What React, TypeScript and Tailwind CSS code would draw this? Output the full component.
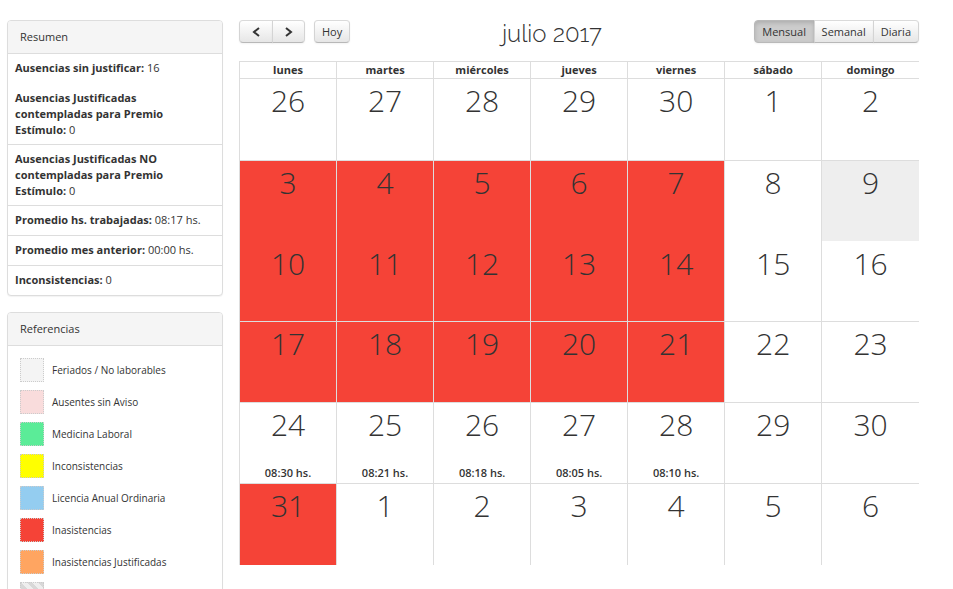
import type { ReactNode } from "react";

type Stat = { label: string; value: string; spacing: string };

const stats: Stat[] = [
  { label: "Ausencias sin justificar:", value: "16", spacing: "pb-2" },
  {
    label: "Ausencias Justificadas contempladas para Premio Estímulo:",
    value: "0",
    spacing: "border-b pb-[6px]",
  },
  {
    label: "Ausencias Justificadas NO contempladas para Premio Estímulo:",
    value: "0",
    spacing: "border-b pb-[6px]",
  },
  { label: "Promedio hs. trabajadas:", value: "08:17 hs.", spacing: "border-b pb-[7px]" },
  { label: "Promedio mes anterior:", value: "00:00 hs.", spacing: "border-b pb-[7px]" },
  { label: "Inconsistencias:", value: "0", spacing: "pb-[7px]" },
];

const legend = [
  { label: "Feriados / No laborables", color: "bg-[#f4f4f4]" },
  { label: "Ausentes sin Aviso", color: "bg-[#f9dcdc]" },
  { label: "Medicina Laboral", color: "bg-[#5bec98]" },
  { label: "Inconsistencias", color: "bg-[#ffff00]" },
  { label: "Licencia Anual Ordinaria", color: "bg-[#94cdf0]" },
  { label: "Inasistencias", color: "bg-[#f54337]" },
  { label: "Inasistencias Justificadas", color: "bg-[#ffa561]" },
  { label: "", color: "bg-[repeating-linear-gradient(45deg,#eeeeee_0,#eeeeee_4px,#d8d8d8_4px,#d8d8d8_8px)]" },
];

const weekdays = ["lunes", "martes", "miércoles", "jueves", "viernes", "sábado", "domingo"];

type Day = { n: number; absent?: boolean; holiday?: boolean; hours?: string };

const ruled = "border-t pt-1";
const unruled = "pt-[5px]";

const weeks: { height: string; edge: string; days: Day[] }[] = [
  {
    height: "h-[82px]",
    edge: ruled,
    days: [{ n: 26 }, { n: 27 }, { n: 28 }, { n: 29 }, { n: 30 }, { n: 1 }, { n: 2 }],
  },
  {
    height: "h-[81px]",
    edge: ruled,
    days: [
      { n: 3, absent: true },
      { n: 4, absent: true },
      { n: 5, absent: true },
      { n: 6, absent: true },
      { n: 7, absent: true },
      { n: 8 },
      { n: 9, holiday: true },
    ],
  },
  {
    height: "h-[80px]",
    edge: unruled,
    days: [
      { n: 10, absent: true },
      { n: 11, absent: true },
      { n: 12, absent: true },
      { n: 13, absent: true },
      { n: 14, absent: true },
      { n: 15 },
      { n: 16 },
    ],
  },
  {
    height: "h-[81px]",
    edge: ruled,
    days: [
      { n: 17, absent: true },
      { n: 18, absent: true },
      { n: 19, absent: true },
      { n: 20, absent: true },
      { n: 21, absent: true },
      { n: 22 },
      { n: 23 },
    ],
  },
  {
    height: "h-[81px]",
    edge: ruled,
    days: [
      { n: 24, hours: "08:30 hs." },
      { n: 25, hours: "08:21 hs." },
      { n: 26, hours: "08:18 hs." },
      { n: 27, hours: "08:05 hs." },
      { n: 28, hours: "08:10 hs." },
      { n: 29 },
      { n: 30 },
    ],
  },
  {
    height: "h-[82px]",
    edge: ruled,
    days: [{ n: 31, absent: true }, { n: 1 }, { n: 2 }, { n: 3 }, { n: 4 }, { n: 5 }, { n: 6 }],
  },
];

function Panel({ title, children }: { title: string; children: ReactNode }) {
  return (
    <section className="overflow-hidden rounded border border-[#dddddd] bg-white shadow-[0_1px_1px_rgba(0,0,0,0.05)]">
      <h2 className="border-b border-[#dddddd] bg-[#f5f5f5] px-3 py-2 leading-4">{title}</h2>
      {children}
    </section>
  );
}

function Chevron({ d }: { d: string }) {
  return (
    <svg viewBox="0 0 8 10" className="h-[10px] w-2" fill="none" stroke="currentColor" strokeWidth="2" aria-hidden="true">
      <path d={d} />
    </svg>
  );
}

const buttonUp =
  "flex h-[23px] items-center justify-center border border-x-[#d4d4d4] border-t-[#dadada] border-b-[#b8b8b8] bg-linear-to-b from-white to-[#e6e6e6] px-[7px] shadow-[inset_0_1px_0_rgba(255,255,255,0.2),0_1px_2px_rgba(0,0,0,0.05)]";
const buttonDown =
  "flex h-[23px] items-center justify-center border border-[#b9b9b9] bg-[#cccccc] px-[7px] shadow-[inset_0_2px_4px_rgba(0,0,0,0.15),0_1px_2px_rgba(0,0,0,0.05)]";

export default function App() {
  return (
    <div className="flex h-screen items-start gap-4 overflow-hidden bg-white pt-5 pr-[34px] pl-[7px] font-['Open_Sans','Noto_Sans',sans-serif] text-[11px] leading-4 text-[#333333]">
      <aside className="flex w-[216px] shrink-0 flex-col gap-4">
        <Panel title="Resumen">
          <ul>
            {stats.map((s) => (
              <li key={s.label} className={`border-[#dddddd] px-[7px] pt-[6px] ${s.spacing}`}>
                <strong className="font-bold">{s.label}</strong> {s.value}
              </li>
            ))}
          </ul>
        </Panel>
        <Panel title="Referencias">
          <ul className="flex flex-col gap-2 p-3 text-[10px]">
            {legend.map((item) => (
              <li key={item.color} className="flex items-center gap-2">
                <span className={`size-6 shrink-0 border border-dotted border-[#cccccc] ${item.color}`} />
                {item.label}
              </li>
            ))}
          </ul>
        </Panel>
      </aside>

      <main className="min-w-0 flex-1">
        <header className="flex h-[41px] items-start justify-between">
          <div className="flex gap-[9px]">
            <div className="flex">
              <button type="button" aria-label="Anterior" className={`${buttonUp} w-[34px] rounded-l`}>
                <Chevron d="M7 1 L2 5 L7 9" />
              </button>
              <button type="button" aria-label="Siguiente" className={`${buttonUp} -ml-px w-[33px] rounded-r`}>
                <Chevron d="M1 1 L6 5 L1 9" />
              </button>
            </div>
            <button type="button" className={`${buttonUp} rounded`}>
              Hoy
            </button>
          </div>
          <h1 className="font-['Raleway','Lato',sans-serif] text-[24px] leading-7 font-light">julio 2017</h1>
          <div className="flex">
            <button type="button" aria-pressed="true" className={`${buttonDown} min-w-[61px] rounded-l`}>
              Mensual
            </button>
            <button type="button" aria-pressed="false" className={`${buttonUp} -ml-px`}>
              Semanal
            </button>
            <button type="button" aria-pressed="false" className={`${buttonUp} -ml-px rounded-r`}>
              Diaria
            </button>
          </div>
        </header>

        <table className="w-full table-fixed border-separate border-spacing-0 text-center">
          <colgroup>
            <col span={6} className="w-[14.27%]" />
            <col />
          </colgroup>
          <thead>
            <tr>
              {weekdays.map((d) => (
                <th key={d} scope="col" className="border-t border-l border-[#dddddd] p-0 font-bold">
                  {d}
                </th>
              ))}
            </tr>
          </thead>
          <tbody>
            {weeks.map((week, i) => (
              <tr key={i} className={week.height}>
                {week.days.map((day) => (
                  <td
                    key={day.n}
                    className={`border-l border-[#dddddd] px-0 pb-0 align-top ${week.edge} ${
                      day.absent ? "bg-[#f54337]" : day.holiday ? "bg-[#eeeeee]" : ""
                    }`}
                  >
                    <div className="text-[30px] leading-9 font-light">{day.n}</div>
                    {day.hours && <div className="pt-[22px] font-semibold">{day.hours}</div>}
                  </td>
                ))}
              </tr>
            ))}
          </tbody>
        </table>
      </main>
    </div>
  );
}
